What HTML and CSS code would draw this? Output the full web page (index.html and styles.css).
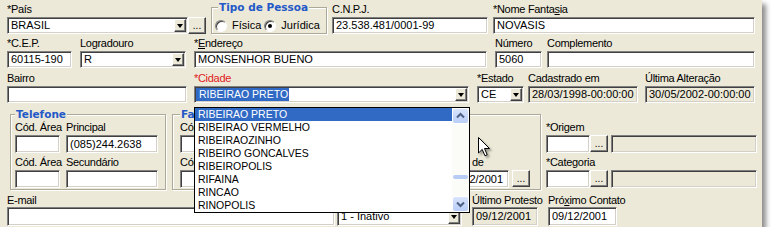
FILE: index.html
```html
<!DOCTYPE html>
<html>
<head>
<meta charset="utf-8">
<link rel="stylesheet" href="styles.css">
</head>
<body>
<div class="panel">
  <div class="row r1">
    <div class="fld f-pais">
      <div class="lb">*País</div>
      <div class="ctl">
        <div class="combo w181"><span class="val">BRASIL</span><span class="arr"></span></div>
        <div class="dots">...</div>
      </div>
    </div>
    <fieldset class="grp g-tipo">
      <legend>Tipo de Pessoa</legend>
      <div class="radios">
        <span class="radio"></span><span class="rt">Física</span>
        <span class="radio on"></span><span class="rt">Jurídica</span>
      </div>
    </fieldset>
    <div class="fld f-cnpj">
      <div class="lb">C.N.P.J.</div>
      <div class="ed">23.538.481/0001-99</div>
    </div>
    <div class="fld f-nome">
      <div class="lb">*Nome Fanta<u>s</u>ia</div>
      <div class="ed">NOVASIS</div>
    </div>
  </div>

  <div class="row r2">
    <div class="fld f-cep">
      <div class="lb">*C.E.P.</div>
      <div class="ed">60115-190</div>
    </div>
    <div class="fld f-log">
      <div class="lb">Logradouro</div>
      <div class="combo"><span class="val">R</span><span class="arr"></span></div>
    </div>
    <div class="fld f-end">
      <div class="lb">*<u>E</u>ndereço</div>
      <div class="ed">MONSENHOR BUENO</div>
    </div>
    <div class="fld f-num">
      <div class="lb">Número</div>
      <div class="ed">5060</div>
    </div>
    <div class="fld f-comp">
      <div class="lb">Complemento</div>
      <div class="ed"></div>
    </div>
  </div>

  <div class="row r3">
    <div class="fld f-bai">
      <div class="lb">Bairro</div>
      <div class="ed"></div>
    </div>
    <div class="fld f-cid">
      <div class="lb red">*Cidade</div>
      <div class="combo"><span class="val sm"><span class="hl">RIBEIRAO PRETO</span></span><span class="arr"></span></div>
    </div>
    <div class="fld f-est">
      <div class="lb">*Estado</div>
      <div class="combo"><span class="val">CE</span><span class="arr"></span></div>
    </div>
    <div class="fld f-cad">
      <div class="lb">Cadastrado em</div>
      <div class="ed ro">28/03/1998-00:00:00</div>
    </div>
    <div class="fld f-ult">
      <div class="lb">Última Alteração</div>
      <div class="ed ro">30/05/2002-00:00:00</div>
    </div>
  </div>

  <div class="row ra">
    <fieldset class="grp g-tel">
      <legend>Telefone</legend>
      <div class="gl">
        <div class="fld w45"><div class="lb">Cód. Área</div><div class="ed h18"></div></div>
        <div class="fld w92 ml6"><div class="lb">Principal</div><div class="ed h18">(085)244.2638</div></div>
      </div>
      <div class="gl mt3">
        <div class="fld w45"><div class="lb">Cód. Área</div><div class="ed h18"></div></div>
        <div class="fld w92 ml6"><div class="lb">Secundário</div><div class="ed h18"></div></div>
      </div>
    </fieldset>
    <fieldset class="grp g-fax">
      <legend>Fa</legend>
      <div class="gl">
        <div class="fld w45"><div class="lb">Cód</div><div class="ed h18"></div></div>
      </div>
      <div class="gl mt3">
        <div class="fld w45"><div class="lb">Cód</div><div class="ed h18"></div></div>
      </div>
    </fieldset>
    <div class="grp g-cob">
      <div class="fld f-val">
        <div class="lb tail">de</div>
        <div class="ctl"><div class="ed h18 w65">09/12/2001</div><div class="dots h18 ml3">...</div></div>
      </div>
    </div>
    <div class="rcol">
      <div class="lb">*Origem</div>
      <div class="ctl"><div class="ed h18 w44"></div><div class="dots h18">...</div><div class="ed ro h18 w146 ml3"></div></div>
      <div class="lb mt3">*Categoria</div>
      <div class="ctl"><div class="ed h18 w44"></div><div class="dots h18">...</div><div class="ed ro h18 w146 ml3"></div></div>
    </div>
  </div>

  <div class="row rbot">
    <div class="fld f-mail">
      <div class="lb nb">E-mail</div>
      <div class="ed h19"></div>
    </div>
    <div class="fld f-sit">
      <div class="lb nb"></div>
      <div class="combo h19"><span class="val">1 - Inativo</span><span class="arr"></span></div>
    </div>
    <div class="fld f-prot">
      <div class="lb nb">Último Protesto</div>
      <div class="ed ro h19">09/12/2001</div>
    </div>
    <div class="fld f-prox">
      <div class="lb nb">Pró<u>x</u>imo Contato</div>
      <div class="ed h19">09/12/2001</div>
    </div>
  </div>

  <div class="dd">
    <div class="items">
      <div class="it sel">RIBEIRAO PRETO</div>
      <div class="it">RIBEIRAO VERMELHO</div>
      <div class="it">RIBEIRAOZINHO</div>
      <div class="it">RIBEIRO GONCALVES</div>
      <div class="it">RIBEIROPOLIS</div>
      <div class="it">RIFAINA</div>
      <div class="it">RINCAO</div>
      <div class="it">RINOPOLIS</div>
    </div>
    <div class="sb">
      <div class="sbb"><svg width="15" height="14" viewBox="0 0 15 14"><path d="M4 8.5 L7.5 5 L11 8.5" fill="none" stroke="#4D6185" stroke-width="2"/></svg></div>
      <div class="trk"><div class="thumb"></div></div>
      <div class="sbb"><svg width="15" height="14" viewBox="0 0 15 14"><path d="M4 5.5 L7.5 9 L11 5.5" fill="none" stroke="#4D6185" stroke-width="2"/></svg></div>
    </div>
  </div>

  <svg class="cursor" width="14" height="22" viewBox="0 0 14 22"><path d="M1.5 1.5 L1.5 17 L5.2 13.4 L8 19.8 L10.2 18.8 L7.5 12.5 L12.5 12.5 Z" fill="#fff" stroke="#000" stroke-width="1" stroke-linejoin="miter"/></svg>
</div>
</body>
</html>
```
FILE: styles.css
```css
* { box-sizing: border-box; }
body {
  margin: 0;
  background: #fff;
  font-family: "Liberation Sans", Arial, sans-serif;
  font-size: 11px;
  line-height: 13px;
  color: #000;
}
.panel {
  position: relative;
  width: 762px;
  height: 227px;
  padding-top: 3px;
  background: #ECE9D8;
  box-shadow: 4px 4px 5px rgba(0,0,0,0.45);
}
.row { display: flex; align-items: flex-start; }
.r2 { margin-top: 3px; }
.r3 { margin-top: 4px; }
.ra { margin-top: 5px; }
.rbot { margin-top: 4px; }

.fld { display: flex; flex-direction: column; flex: none; }
.lb {
  height: 13px;
  line-height: 13px;
  margin-bottom: 1px;
  white-space: nowrap;
  letter-spacing: -0.3px;
}
.lb.nb { margin-bottom: 0; }
.lb u { text-decoration: underline; }
.red { color: #E0201B; }
.ctl { display: flex; }

.ed, .combo {
  height: 17px;
  background: #fff;
  border: 1px solid;
  border-color: #808080 #fff #fff #808080;
  box-shadow: inset 1px 1px #404040, inset -1px -1px #D4D0C8;
  white-space: nowrap;
  overflow: hidden;
}
.ed { padding: 1px 1px 1px 3px; line-height: 13px; }
.ed.ro { background: #ECE9D8; }
.h18 { height: 18px; line-height: 14px; }
.h19 { height: 19px; line-height: 15px; }
.combo { display: flex; padding: 1px; }
.combo .val { flex: 1; padding-left: 2px; line-height: 13px; }
.combo.h19 .val { line-height: 15px; }
.combo .val.sm { padding-left: 0; font-size: 10.5px; }
.hl { background: #316AC5; color: #fff; padding: 0 1px 0 3px; display: inline-block; line-height: 13px; }
.arr {
  flex: none;
  width: 12px;
  height: 100%;
  background: #ECE9D8;
  border: 1px solid;
  border-color: #fff #404040 #404040 #fff;
  box-shadow: inset -1px -1px #808080;
  display: flex;
  align-items: center;
  justify-content: center;
}
.arr::after {
  content: "";
  border-top: 4px solid #000;
  border-left: 3.5px solid transparent;
  border-right: 3.5px solid transparent;
  margin: 1px 1px 0 0;
}
.dots {
  flex: none;
  width: 18px;
  height: 17px;
  background: #ECE9D8;
  border: 1px solid;
  border-color: #fff #404040 #404040 #fff;
  box-shadow: inset -1px -1px #808080;
  display: flex;
  align-items: flex-end;
  justify-content: center;
  font-size: 10px;
  line-height: 10px;
  padding-bottom: 2px;
  letter-spacing: 0;
}

/* group boxes */
.grp {
  flex: none;
  margin: 0;
  min-width: 0;
  border: 1px solid #ACA998;
  box-shadow: inset 1px 1px #fff, 1px 1px #fff;
}
.grp legend {
  font-family: "DejaVu Sans", Verdana, sans-serif;
  font-weight: bold;
  font-size: 10.5px;
  line-height: 13px;
  color: #2358C8;
  padding: 0 1px;
  background: #ECE9D8;
}
.g-tipo { margin: -2px 0 0 5px; width: 116px; height: 33px; padding: 0 3px; }
.g-tipo legend { margin-left: 3px; }
.radios { display: flex; align-items: center; margin-top: 5px; height: 13px; }
.radio {
  position: relative;
  flex: none;
  width: 12px;
  height: 12px;
  border-radius: 50%;
  background: #fff;
  border: 1px solid;
  border-color: #808080 #fff #fff #808080;
  box-shadow: inset 1px 1px #404040;
}
.radio.on::after {
  content: "";
  position: absolute;
  left: 3px;
  top: 3px;
  width: 4px;
  height: 4px;
  border-radius: 50%;
  background: #000;
}
.rt { margin: 0 3px 0 5px; }

.g-tel { margin-left: 10px; width: 156px; height: 82px; padding: 0 4px; }
.g-fax { margin-left: 6px; width: 163px; height: 82px; padding: 0 7px; }
.g-cob { margin: 6px 0 0 5px; width: 201px; height: 76px; padding: 0 4px; }
.gl { display: flex; }
.f-val { margin: 41px 0 0 97px; }
.f-val .lb.tail { margin-left: 30px; }
.f-val .ed { margin-left: 2px; }

.rcol { flex: none; margin: 13px 0 0 5px; width: 211px; }

.w44 { width: 44px; }
.w45 { width: 45px; }
.w65 { width: 65px; }
.w92 { width: 92px; }
.w146 { width: 146px; }
.w181 { width: 181px; }
.ml3 { margin-left: 3px; }
.ml6 { margin-left: 6px; }
.mt3 { margin-top: 3px; }

/* row fields */
.f-pais { margin-left: 7px; width: 199px; }
.f-cnpj { margin-left: 5px; width: 156px; }
.f-nome { margin-left: 5px; width: 262px; }
.f-cep { margin-left: 7px; width: 65px; }
.f-log { margin-left: 8px; width: 106px; }
.f-end { margin-left: 8px; width: 293px; }
.f-num { margin-left: 8px; width: 47px; }
.f-comp { margin-left: 5px; width: 208px; }
.f-bai { margin-left: 7px; width: 180px; }
.f-cid { margin-left: 7px; width: 275px; }
.f-est { margin-left: 8px; width: 47px; }
.f-cad { margin-left: 4px; width: 110px; }
.f-ult { margin-left: 7px; width: 110px; }
.f-mail { margin-left: 7px; width: 328px; }
.f-sit { margin-left: 2px; width: 125px; }
.f-prot { margin-left: 10px; width: 66px; }
.f-prox { margin-left: 10px; width: 69px; }

/* dropdown list (overlay) */
.dd {
  position: absolute;
  left: 194px;
  top: 107px;
  width: 276px;
  height: 106px;
  border: 1px solid #000;
  background: #fff;
  display: flex;
}
.items { flex: 1; }
.it {
  height: 13px;
  line-height: 13px;
  padding-left: 3px;
  font-size: 10.5px;
  white-space: nowrap;
}
.it.sel { background: #316AC5; color: #fff; }
.sb {
  flex: none;
  width: 17px;
  display: flex;
  flex-direction: column;
  background: #FBFBF8;
}
.sbb {
  height: 16px;
  border: 1px solid #fff;
  border-radius: 3px;
  background: linear-gradient(#D9E4FC, #B9CDF7);
  display: flex;
  align-items: center;
  justify-content: center;
}
.trk { flex: 1; }
.thumb {
  margin: 51px 1px 0;
  height: 4px;
  border-radius: 2px;
  background: #B8CBF5;
}
.cursor {
  position: absolute;
  left: 477px;
  top: 136px;
  filter: drop-shadow(2px 2px 1px rgba(0,0,0,0.35));
}
```
